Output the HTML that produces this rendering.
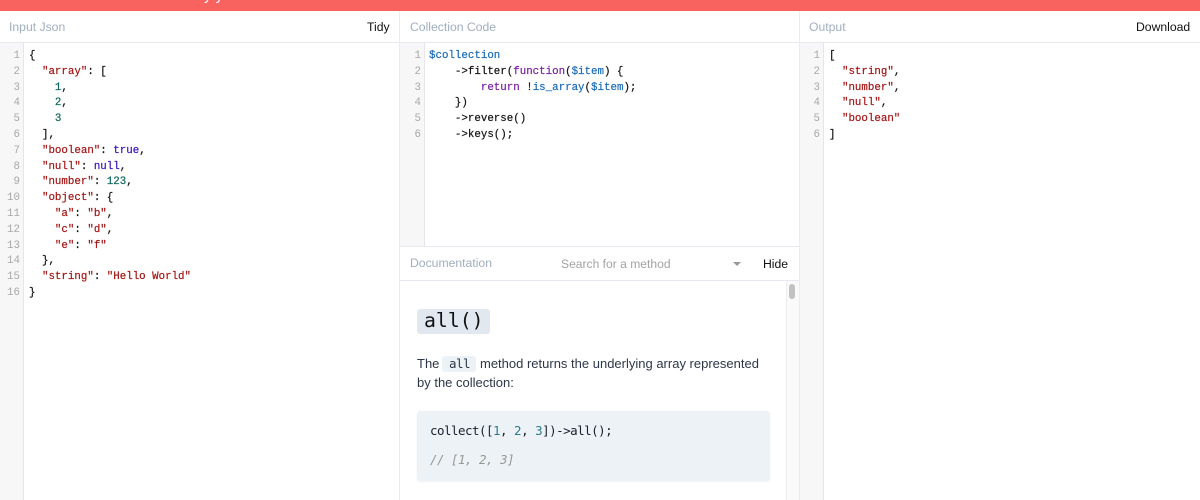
<!DOCTYPE html>
<html><head><meta charset="utf-8"><style>
html,body{margin:0;padding:0;background:#fff}
body{width:1200px;height:500px;overflow:hidden;position:relative;font-family:"Liberation Sans",sans-serif}
div{position:absolute;box-sizing:border-box}
.t{white-space:pre;font-size:12px;line-height:16px}
.lab{color:#a0aec0;font-size:12.2px}
.btn{color:#111;font-size:12.2px}
.ln{font:10.8px/15.8px "Liberation Mono",monospace;color:#a8a8a8;text-align:right;white-space:pre}
.code{font:10.8px/15.8px "Liberation Mono",monospace;color:#111;white-space:pre;-webkit-text-stroke:.2px}
.s{color:#a31515}.n{color:#09665a}.k{color:#3a10c0}.v{color:#1a6bb5}.f{color:#7a1fa2}
.m{font-family:'DejaVu Sans Mono',monospace;font-size:12.5px;line-height:16px;letter-spacing:-.525px}
</style></head><body>
<div style="left:0;top:0;width:1200px;height:11px;background:#f9635f"></div>
<div class="t" style="left:204px;top:-12px;color:#fff;font-size:15px">y y</div>

<div style="left:0;top:42px;width:1200px;height:1px;background:#e6e9f0"></div>
<div style="left:399px;top:11px;width:1px;height:489px;background:#e9ecf1"></div>
<div style="left:799px;top:11px;width:1px;height:489px;background:#e9ecf1"></div>

<div class="t lab" style="left:9px;top:19px">Input Json</div>
<div class="t btn" style="left:367px;top:19px">Tidy</div>
<div class="t lab" style="left:410px;top:19px">Collection Code</div>
<div class="t lab" style="left:809px;top:19px">Output</div>
<div class="t btn" style="left:1136px;top:19px">Download</div>

<div style="left:0;top:43px;width:24px;height:457px;background:#f7f7f7;border-right:1px solid #e6e6e6"></div>
<div style="left:400px;top:43px;width:25px;height:203px;background:#f7f7f7;border-right:1px solid #e6e6e6"></div>
<div style="left:800px;top:43px;width:24px;height:457px;background:#f7f7f7;border-right:1px solid #e6e6e6"></div>

<div class="ln" style="left:0;top:49px;width:20px">1
2
3
4
5
6
7
8
9
10
11
12
13
14
15
16</div>
<div class="code" style="left:29px;top:49px">{
  <span class="s">"array"</span>: [
    <span class="n">1</span>,
    <span class="n">2</span>,
    <span class="n">3</span>
  ],
  <span class="s">"boolean"</span>: <span class="k">true</span>,
  <span class="s">"null"</span>: <span class="k">null</span>,
  <span class="s">"number"</span>: <span class="n">123</span>,
  <span class="s">"object"</span>: {
    <span class="s">"a"</span>: <span class="s">"b"</span>,
    <span class="s">"c"</span>: <span class="s">"d"</span>,
    <span class="s">"e"</span>: <span class="s">"f"</span>
  },
  <span class="s">"string"</span>: <span class="s">"Hello World"</span>
}</div>

<div class="ln" style="left:400px;top:49px;width:21px">1
2
3
4
5
6</div>
<div class="code" style="left:429px;top:49px"><span class="v">$collection</span>
    -&gt;filter(<span class="f">function</span>(<span class="v">$item</span>) {
        <span class="f">return</span> !<span class="v">is_array</span>(<span class="v">$item</span>);
    })
    -&gt;reverse()
    -&gt;keys();</div>

<div class="ln" style="left:800px;top:49px;width:20px">1
2
3
4
5
6</div>
<div class="code" style="left:829px;top:49px">[
  <span class="s">"string"</span>,
  <span class="s">"number"</span>,
  <span class="s">"null"</span>,
  <span class="s">"boolean"</span>
]</div>

<div style="left:400px;top:246px;width:399px;height:1px;background:#e6e9f0"></div>
<div style="left:400px;top:280px;width:399px;height:1px;background:#e6e9f0"></div>
<div class="t lab" style="left:410px;top:255px">Documentation</div>
<div class="t" style="left:561px;top:256px;color:#a3a3a3;font-size:12.1px">Search for a method</div>
<div style="left:733px;top:262px;width:0;height:0;border-left:4px solid transparent;border-right:4px solid transparent;border-top:4px solid #999"></div>
<div class="t btn" style="left:763px;top:256px">Hide</div>

<div style="left:786px;top:281px;width:13px;height:219px;background:#fafafa;border-left:1px solid #ececec"></div>
<div style="left:789px;top:284px;width:6px;height:15px;background:#c1c1c1;border-radius:3px"></div>

<div style="left:417px;top:309px;width:73px;height:25px;background:#e2e8f0;border-radius:3px"></div>
<div class="t" style="left:424px;top:309px;font:19.8px/23px 'DejaVu Sans Mono',monospace;color:#111">all()</div>

<div class="t" style="left:417px;top:354px;font-size:13px;line-height:20px;color:#2d3748">The</div>
<div style="left:442px;top:356px;width:34px;height:16px;background:#edf2f7;border-radius:3px"></div>
<div class="t m" style="left:449px;top:356px;color:#2d3748">all</div>
<div class="t" style="left:480px;top:354px;font-size:13px;line-height:20px;color:#2d3748">method returns the underlying array represented</div>
<div class="t" style="left:417px;top:373px;font-size:13px;line-height:20px;color:#2d3748">by the collection:</div>

<div style="left:417px;top:411px;width:353px;height:70px;background:#edf2f7;border-radius:3px;box-shadow:0 1px 2px rgba(0,0,0,.05)"></div>
<div class="t m" style="left:430px;top:423px;color:#1a202c">collect([<span style="color:#2c7a8c">1</span>, <span style="color:#2c7a8c">2</span>, <span style="color:#2c7a8c">3</span>])-&gt;all();</div>
<div class="t m" style="left:430px;top:452px;font-style:italic;color:#969896">// [1, 2, 3]</div>
</body></html>
